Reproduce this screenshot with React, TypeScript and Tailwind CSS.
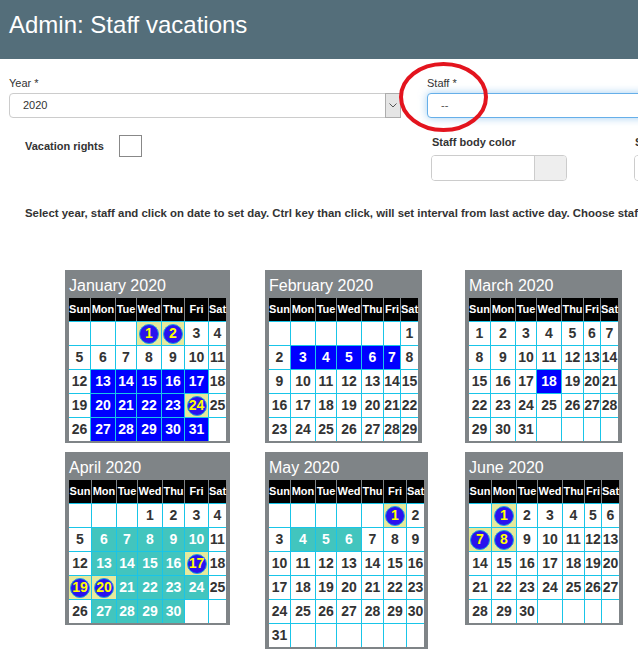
import React from 'react';

type Mark = 'b' | 't' | 'c';

type MonthDef = {
  name: string;
  m: number;
  cols: string;
  marks: Record<number, Mark>;
};

const range = (from: number, to: number, mark: Mark) => {
  const out: Record<number, Mark> = {};
  for (let d = from; d <= to; d++) out[d] = mark;
  return out;
};

const months: MonthDef[] = [
  {
    name: 'January',
    m: 0,
    cols: 'grid-cols-[21px_24px_20px_24px_22px_23px_17px]',
    marks: { ...range(13, 17, 'b'), ...range(20, 23, 'b'), ...range(27, 31, 'b'), 1: 'c', 2: 'c', 24: 'c' },
  },
  {
    name: 'February',
    m: 1,
    cols: 'grid-cols-[21px_24px_20px_24px_21px_16px_17px]',
    marks: range(3, 7, 'b'),
  },
  {
    name: 'March',
    m: 2,
    cols: 'grid-cols-[21px_24px_20px_24px_21px_16px_17px]',
    marks: { 18: 'b' },
  },
  {
    name: 'April',
    m: 3,
    cols: 'grid-cols-[22px_24px_20px_24px_21px_23px_17px]',
    marks: { ...range(6, 10, 't'), ...range(13, 16, 't'), ...range(21, 24, 't'), ...range(27, 30, 't'), 17: 'c', 19: 'c', 20: 'c' },
  },
  {
    name: 'May',
    m: 4,
    cols: 'grid-cols-[21px_24px_20px_24px_21px_22px_17px]',
    marks: { ...range(4, 6, 't'), 1: 'c' },
  },
  {
    name: 'June',
    m: 5,
    cols: 'grid-cols-[22px_24px_20px_24px_21px_16px_17px]',
    marks: { 1: 'c', 7: 'c', 8: 'c' },
  },
];

const dayNames = ['Sun', 'Mon', 'Tue', 'Wed', 'Thu', 'Fri', 'Sat'];

const Month = ({ def }: { def: MonthDef }) => {
  const first = new Date(2020, def.m, 1).getDay();
  const days = new Date(2020, def.m + 1, 0).getDate();
  const total = Math.ceil((first + days) / 7) * 7;
  const cells = Array.from({ length: total }, (_, i) => i - first + 1);

  return (
    <div className="w-fit bg-[#7f8487] px-1 pt-1 pb-[2px]">
      <div className="text-[16px] leading-6 text-white">{def.name} 2020</div>
      <div className={`grid ${def.cols} gap-x-px`}>
        {dayNames.map((d) => (
          <div key={d} className="h-[23px] bg-black text-white text-[11px] font-bold flex items-center justify-center whitespace-nowrap">
            {d}
          </div>
        ))}
      </div>
      <div className={`grid ${def.cols} gap-px bg-[#19c5e8] pt-px`}>
        {cells.map((d, i) => {
          if (d < 1 || d > days) return <div key={i} className="h-[23px] bg-white" />;
          const mark = def.marks[d];
          if (mark === 'c') {
            return (
              <div key={i} className="h-[23px] bg-[#e6e99c] flex items-center justify-center">
                <span className="w-5 h-5 shrink-0 rounded-full bg-[#2a12ee] border border-[#1ea3dd] flex items-center justify-center text-[14px] font-bold text-[#ffff00]">
                  {d}
                </span>
              </div>
            );
          }
          const cls =
            mark === 'b'
              ? 'bg-[#0000ff] text-white'
              : mark === 't'
              ? 'bg-[#42c5be] text-white'
              : 'bg-white text-[#333]';
          return (
            <div key={i} className={`h-[23px] flex items-center justify-center text-[14px] font-bold ${cls}`}>
              {d}
            </div>
          );
        })}
      </div>
    </div>
  );
};

export default function App() {
  return (
    <div className="relative h-screen overflow-hidden bg-white font-['Liberation_Sans',Arial,sans-serif] text-[#333]">
      <header className="h-[59px] bg-[#546e7a] pl-[9px] pt-[13px]">
        <h1 className="text-[24px] leading-6 text-white whitespace-nowrap">Admin: Staff vacations</h1>
      </header>

      {/* year / staff */}
      <div className="flex mt-[17px]">
        <div className="ml-[9px] w-[392px] shrink-0">
          <div className="text-[11px] leading-[15px] mb-[2px]">Year *</div>
          <div className="flex h-[25px] items-center rounded border border-[#ccc] bg-white">
            <span className="flex-1 pl-[13px] text-[11px]">2020</span>
            <span className="-my-px -mr-px h-[25px] w-[16px] flex items-center justify-center bg-[#e5e5e5] border border-[#adadad]">
              <svg width="8" height="5" viewBox="0 0 8 5" fill="none">
                <path d="M0.5 0.5L4 4L7.5 0.5" stroke="#555" strokeWidth="1" />
              </svg>
            </span>
          </div>
        </div>
        <div className="ml-[26px] w-[392px] shrink-0">
          <div className="text-[11px] leading-[15px] mb-[2px]">Staff *</div>
          <div className="flex h-[25px] items-center rounded border border-[#66afe9] bg-white shadow-[0_0_8px_rgba(102,175,233,0.6)]">
            <span className="pl-[13px] text-[11px] text-[#555]">--</span>
          </div>
        </div>
      </div>

      {/* vacation rights / colors */}
      <div className="flex items-start mt-[17px]">
        <div className="ml-[25px] w-[406px] shrink-0 flex items-center h-[22px]">
          <span className="w-[94px] text-[11px] font-bold whitespace-nowrap">Vacation rights</span>
          <span className="w-[23px] h-[22px] border border-[#888] bg-white" />
        </div>
        <div className="w-[203px] shrink-0">
          <div className="pl-px text-[11px] font-bold leading-[15px] mb-[5px] whitespace-nowrap">Staff body color</div>
          <div className="flex h-[26px] w-[136px] rounded border border-[#ccc] overflow-hidden">
            <div className="flex-1 bg-white" />
            <div className="w-[32px] bg-[#eee] border-l border-[#ccc]" />
          </div>
        </div>
        <div className="w-[203px] shrink-0">
          <div className="pl-px text-[11px] font-bold leading-[15px] mb-[5px] whitespace-nowrap">Staff font color</div>
          <div className="flex h-[26px] w-[136px] rounded border border-[#ccc] overflow-hidden">
            <div className="flex-1 bg-white" />
            <div className="w-[32px] bg-[#eee] border-l border-[#ccc]" />
          </div>
        </div>
      </div>

      <p className="ml-[25px] mt-[25px] text-[11.4px] font-bold leading-[15px] whitespace-nowrap">
        Select year, staff and click on date to set day. Ctrl key than click, will set interval from last active day. Choose staff colors to mark days.
      </p>

      <div className="ml-[65px] mt-[49px] grid grid-cols-[200px_200px_200px] gap-y-[9px] items-start">
        {months.map((def) => (
          <Month key={def.name} def={def} />
        ))}
      </div>

      {/* red annotation circle */}
      <svg className="absolute left-[399px] top-[62px] pointer-events-none" width="89" height="70" viewBox="0 0 89 70" fill="none">
        <ellipse cx="44.5" cy="35" rx="42.5" ry="33" stroke="#e3141e" strokeWidth="4" />
      </svg>
    </div>
  );
}
